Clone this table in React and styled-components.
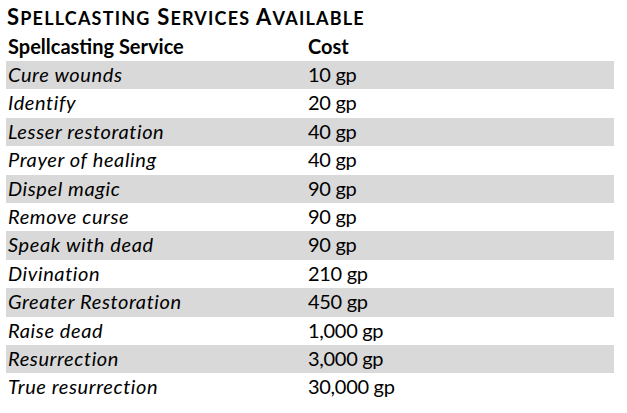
import React from "react";
import styled, { createGlobalStyle } from "styled-components";

const Global = createGlobalStyle`
  html, body { margin: 0; padding: 0; background: #fff; }
  body { font-family: Lato, "Liberation Sans", sans-serif; color: #000; }
`;

const Page = styled.div`
  width: 608px;
  padding-left: 6px;
`;

const Title = styled.h1`
  margin: 0;
  padding: 1px 0 0 1px;
  height: 31.6px;
  font-size: 22px;
  font-weight: 700;
  line-height: 31.6px;
  letter-spacing: 1.2px;
  white-space: nowrap;
`;

const Small = styled.span`
  font-size: 18px;
  text-transform: uppercase;
`;

const Table = styled.div`
  display: grid;
  grid-template-columns: 302px 1fr;
`;

const Row = styled.div`
  display: contents;
  & > div {
    background: ${(p) => (p.$shade ? "#d9d9d9" : "transparent")};
  }
`;

const Cell = styled.div`
  height: 26.4px;
  padding-bottom: 2px;
  line-height: 26.4px;
  font-size: 20px;
  padding-left: ${(p) => (p.$first ? "2px" : "0")};
  font-weight: ${(p) => (p.$head ? 700 : 400)};
  font-style: ${(p) => (p.$italic ? "italic" : "normal")};
  letter-spacing: ${(p) => (p.$italic ? "0.6px" : p.$head ? "0px" : "-0.3px")};
  white-space: nowrap;
`;

const data = [
  ["Cure wounds", "10 gp"],
  ["Identify", "20 gp"],
  ["Lesser restoration", "40 gp"],
  ["Prayer of healing", "40 gp"],
  ["Dispel magic", "90 gp"],
  ["Remove curse", "90 gp"],
  ["Speak with dead", "90 gp"],
  ["Divination", "210 gp"],
  ["Greater Restoration", "450 gp"],
  ["Raise dead", "1,000 gp"],
  ["Resurrection", "3,000 gp"],
  ["True resurrection", "30,000 gp"],
];

function SmallCaps({ text }) {
  return text.split(" ").map((w, i) => (
    <React.Fragment key={i}>
      {i > 0 ? " " : ""}
      {w[0]}
      <Small>{w.slice(1)}</Small>
    </React.Fragment>
  ));
}

export default function App() {
  return (
    <Page>
      <Global />
      <Title>
        <SmallCaps text="Spellcasting Services Available" />
      </Title>
      <Table>
        <Row>
          <Cell $head $first>Spellcasting Service</Cell>
          <Cell $head>Cost</Cell>
        </Row>
        {data.map(([name, cost], i) => (
          <Row key={name} $shade={i % 2 === 0}>
            <Cell $italic $first>{name}</Cell>
            <Cell>{cost}</Cell>
          </Row>
        ))}
      </Table>
    </Page>
  );
}
